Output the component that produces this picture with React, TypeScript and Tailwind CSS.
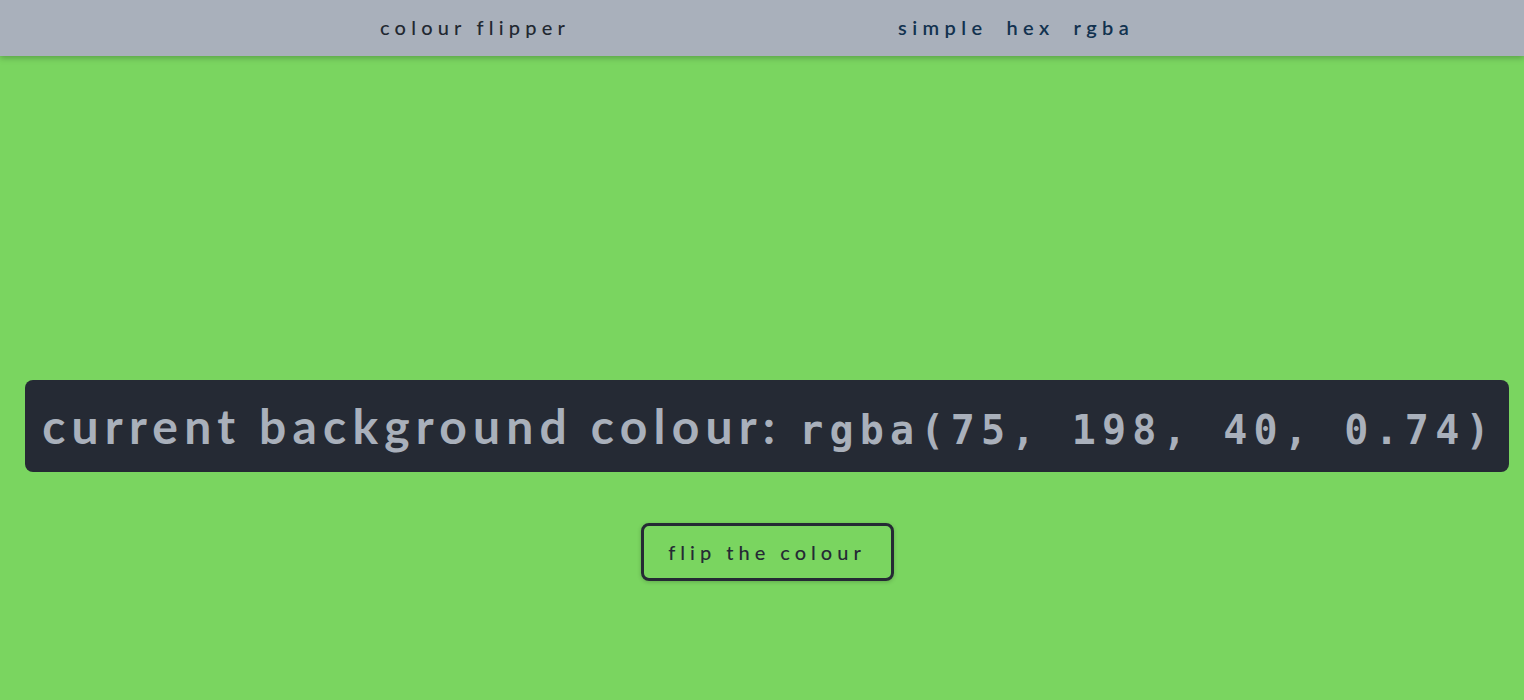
export default function App() {
    return (
        <div className="min-h-screen bg-[#7ad560] font-['Lato','Noto_Sans',sans-serif]">
            {/* navbar */}
            <nav className="h-14 bg-[#a9b0bb] flex items-center shadow-[0_2px_6px_rgba(0,0,0,0.25)] relative">
                <h4 className="ml-[380px] w-[518px] text-[20px] leading-[28px] pb-[2px] tracking-[5.2px] text-[#222831] font-medium">colour flipper</h4>
                <ul className="flex gap-[19px] text-[20px] leading-[28px] pb-[2px] tracking-[5.4px] text-[#12324f] font-semibold">
                    <li>simple</li>
                    <li>hex</li>
                    <li>rgba</li>
                </ul>
            </nav>

            {/* main */}
            <main className="pl-[10px] pt-[324px] flex flex-col items-center">
                <div className="self-stretch mx-[15px] h-[92px] bg-[#252a34] rounded-lg flex items-center justify-center">
                    <h2 className="text-[48px] leading-[60px] font-bold text-[#a9b0bb] tracking-[6.2px] whitespace-nowrap pl-[4px]">
                        current background colour:{' '}
                        <span className="text-[40px] leading-none font-['DejaVu_Sans_Mono',monospace]">rgba(75, 198, 40, 0.74)</span>
                    </h2>
                </div>
                <button className="mt-[51px] w-[253px] h-[58px] border-[3px] border-[#252a34] rounded-lg text-[20px] tracking-[5px] text-[#252a34] font-medium shadow-[0_1px_4px_rgba(0,0,0,0.2)]">
                    flip the colour
                </button>
            </main>
        </div>
    )
}
